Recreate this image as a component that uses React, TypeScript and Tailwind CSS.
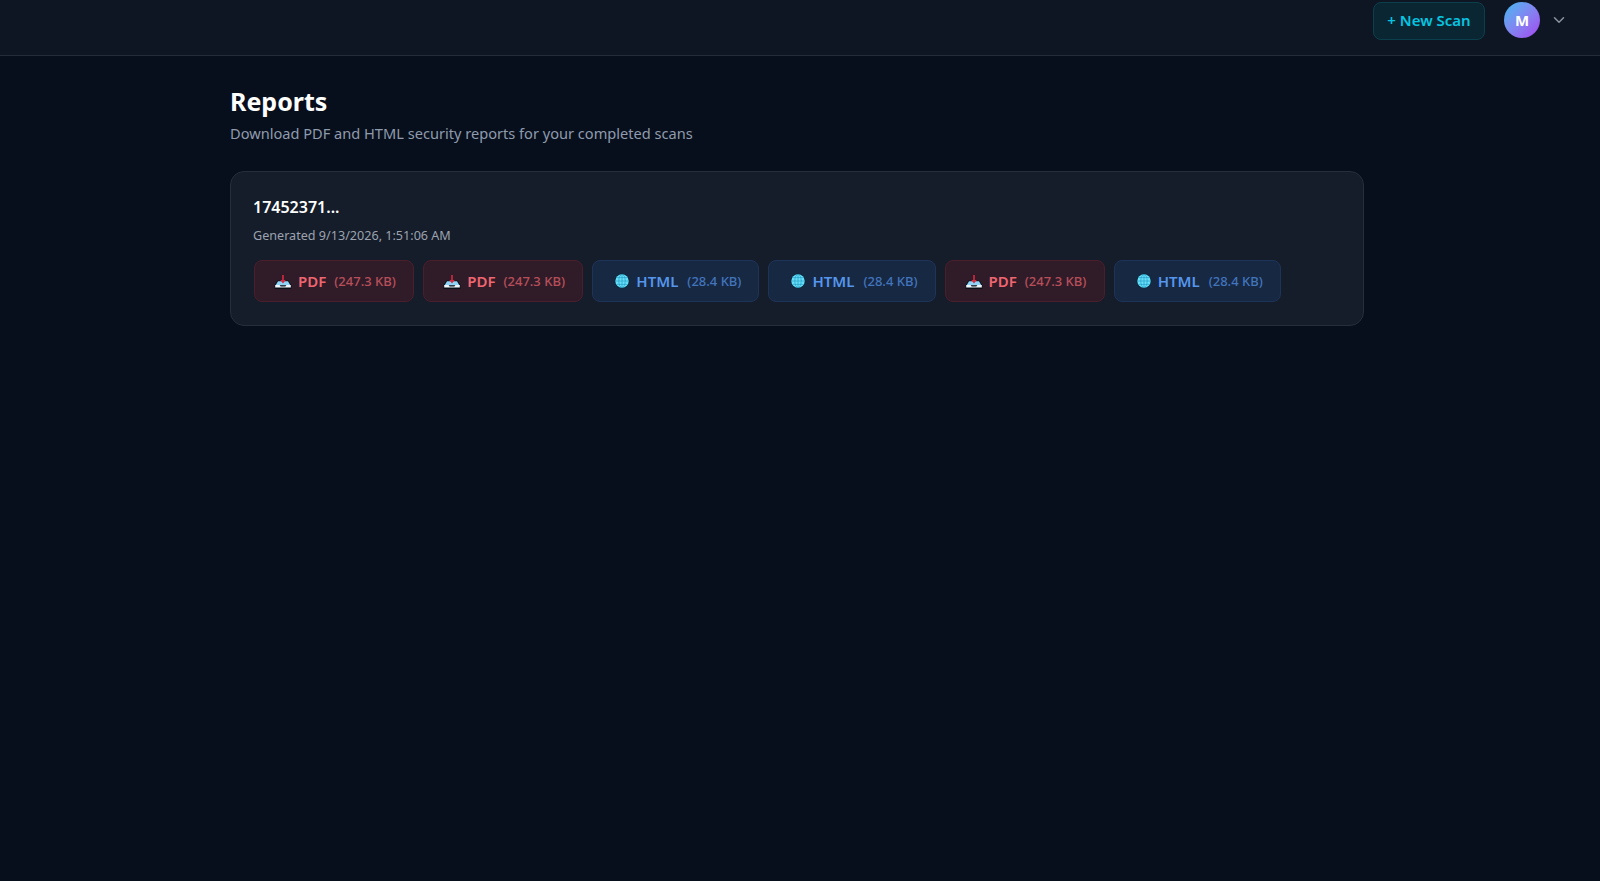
import { ChevronDown } from 'lucide-react';

function TrayIcon() {
  return (
    <svg width="18" height="18" viewBox="0 0 18 18" className="shrink-0">
      <path d="M3.5 8.5h11l2.8 4.5v4H.7v-4z" fill="#0b0f18" />
      <path d="M4 9.2h10l2.4 4H1.6z" fill="#8fd3f7" />
      <path d="M1.2 13h4.4l1 1.4h4.8l1-1.4h4.4v2.4H1.2z" fill="#eef7fc" />
      <path d="M8.2 3h1.6v5h1.9L9 11.4 6.3 8h1.9z" fill="#d8283f" />
    </svg>
  );
}

function GlobeIcon() {
  return (
    <svg width="16" height="16" viewBox="0 0 16 16" className="shrink-0">
      <circle cx="8" cy="8" r="7.4" fill="#0a2a3d" />
      <circle cx="8" cy="8" r="6.7" fill="#66e0fa" />
      <g fill="none" stroke="#1f93bd" strokeWidth="0.6">
        <ellipse cx="8" cy="8" rx="3.2" ry="6.7" />
        <path d="M8 1.3v13.4M1.3 8h13.4M2.4 4.6h11.2M2.4 11.4h11.2" />
      </g>
    </svg>
  );
}

const reports = [
  { type: 'PDF', size: '(247.3 KB)' },
  { type: 'PDF', size: '(247.3 KB)' },
  { type: 'HTML', size: '(28.4 KB)' },
  { type: 'HTML', size: '(28.4 KB)' },
  { type: 'PDF', size: '(247.3 KB)' },
  { type: 'HTML', size: '(28.4 KB)' },
];

function ReportButton({ type, size }: { type: string; size: string }) {
  const isPdf = type === 'PDF';
  return (
    <button
      className={
        isPdf
          ? 'flex h-[42px] items-center gap-[6px] rounded-lg border border-[#4a1f2b] bg-[#2f1c28] pr-[17.4px] pl-[19px] text-[#ef6570]'
          : 'flex h-[42px] items-center gap-[6px] rounded-lg border border-[#1e3358] bg-[#172843] pr-[17px] pl-[21px] text-[#5596ec]'
      }
    >
      {isPdf ? <TrayIcon /> : <GlobeIcon />}
      <span className="text-[15px] font-semibold">{type}</span>
      <span className={isPdf ? 'mt-px ml-[2px] text-[13px] font-medium opacity-70' : 'mt-px ml-[3px] text-[13px] font-medium opacity-70'}>
        {size}
      </span>
    </button>
  );
}

export default function App() {
  return (
    <div className="min-h-screen bg-[#080f1c] font-['Noto_Sans',sans-serif] text-white">
      <header className="flex h-[56px] items-start justify-end border-b border-[#252b37] bg-[#0f1623] pt-[2px] pr-8">
        <button className="h-[38px] w-[112px] rounded-lg border border-[#0c3f4c] bg-[#0b2633] pb-[2px] text-[15px] font-semibold text-[#06c5e0]">
          + New Scan
        </button>
        <div className="ml-[19px] flex items-center">
          <div className="flex h-9 w-9 items-center justify-center rounded-full bg-gradient-to-br from-[#22b8f0] to-[#a13ff0] text-[15px] font-bold">
            M
          </div>
          <ChevronDown className="ml-[10px] h-[18px] w-[18px] text-[#8b93a1]" />
        </div>
      </header>

      <main className="ml-[230px] w-[1134px] pt-[29px]">
        <h1 className="text-[25px] leading-8 font-bold">Reports</h1>
        <p className="mt-[6px] text-[14.6px] leading-5 text-[#8f9bad]">
          Download PDF and HTML security reports for your completed scans
        </p>

        <section className="mt-[28px] rounded-[14px] border border-[#272d3a] bg-[#151c2a] px-[22px] pt-[23px] pb-[23px]">
          <h2 className="text-base leading-6 font-semibold">17452371...</h2>
          <p className="mt-[9px] text-[12.6px] leading-4 text-[#9ca3af]">
            Generated 9/13/2026, 1:51:06 AM
          </p>
          <div className="mt-4 ml-px flex gap-[9px]">
            {reports.map((r, i) => (
              <ReportButton key={i} type={r.type} size={r.size} />
            ))}
          </div>
        </section>
      </main>
    </div>
  );
}
